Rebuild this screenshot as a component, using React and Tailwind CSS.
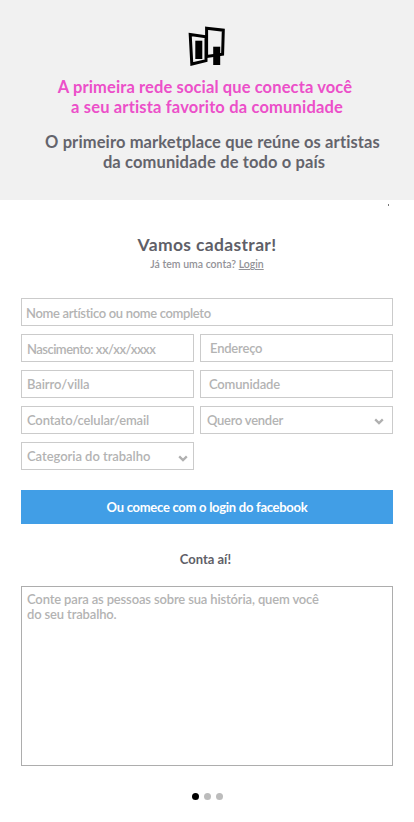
import React from "react";

function Logo() {
  return (
    <svg width="38" height="40" viewBox="0 0 38 40" fill="none" className="block">
      <path d="M2.2 8.6 L18 10.8 L18 34.6 L3.8 38 Z" stroke="#000" strokeWidth="3" />
      <path d="M7.3 14.7H14.3V33H7.3Z" fill="#000" />
      <path d="M18.6 2.2 L35.3 4.2 L34.6 28.2 L18.6 30.6 Z" fill="#f1f1f1" stroke="#000" strokeWidth="3" />
      <path d="M25.2 20.7H32.2V39H25.2Z" fill="#000" />
    </svg>
  );
}

function Chevron({ className }) {
  return (
    <svg width="10" height="7" viewBox="0 0 10 7" fill="none" className={"block shrink-0 " + className}>
      <path d="M1.2 1.4 L5 5.1 L8.8 1.4" stroke="#b0b0b0" strokeWidth="2.3" />
    </svg>
  );
}

function Field({ className = "", textClass, children, chevron }) {
  return (
    <div className={"flex h-7 justify-between border border-[#cbcbcb] text-[13px] leading-4 whitespace-nowrap text-[#b3b3b3] " + className}>
      <span className={textClass}>{children}</span>
      {chevron && <Chevron className={chevron} />}
    </div>
  );
}

export default function App() {
  return (
    <main className="h-[822px] w-[414px] overflow-hidden bg-white font-['Lato',sans-serif] font-semibold [font-variant-ligatures:none]">
      <header className="flex h-[200px] flex-col items-center bg-[#f1f1f1] pt-[26px] text-[16.5px] leading-5 font-bold whitespace-nowrap">
        <Logo />
        <h1 className="mt-[11px] flex flex-col items-center text-[#ec4fc9]">
          <span className="-ml-1 tracking-[0.12px]">A primeira rede social que conecta você</span>
          <span className="tracking-[0.17px]">a seu artista favorito da comunidade</span>
        </h1>
        <h2 className="mt-[15px] flex flex-col items-center text-[#64646c]">
          <span className="ml-[11px] tracking-[0.12px]">O primeiro marketplace que reúne os artistas</span>
          <span className="ml-[14px] tracking-[0.12px]">da comunidade de todo o país</span>
        </h2>
      </header>
      <div className="mt-1 mr-[25px] ml-auto h-0.5 w-px bg-[#777]" />

      <section className="mt-[29px] flex flex-col items-center whitespace-nowrap">
        <h3 className="text-[17.5px] leading-5 font-bold tracking-[0.35px] text-[#5f5f68]">Vamos cadastrar!</h3>
        <p className="mt-[3px] text-[10.5px] leading-3 text-[#929297]">
          Já tem uma conta? <a className="underline underline-offset-1">Login</a>
        </p>
      </section>

      <form className="mx-[21px] mt-7 grid grid-cols-[173px_193px] gap-x-1.5 gap-y-2">
        <Field className="col-span-2" textClass="pt-1.5 pl-1 tracking-[-0.34px]">Nome artístico ou nome completo</Field>
        <Field textClass="pt-1.5 pl-[5px] tracking-[-0.52px]">Nascimento: xx/xx/xxxx</Field>
        <Field textClass="pt-[5px] pl-[9px] tracking-[-0.2px]">Endereço</Field>
        <Field textClass="pt-[5px] pl-[5px] tracking-[-0.1px]">Bairro/villa</Field>
        <Field textClass="pt-[5px] pl-2 tracking-[-0.17px]">Comunidade</Field>
        <Field textClass="pt-[5px] pl-[5px] tracking-[-0.15px]">Contato/celular/email</Field>
        <Field textClass="pt-[5px] pl-1.5 tracking-[-0.27px]" chevron="mt-[11px] mr-2">Quero vender</Field>
        <Field textClass="pt-[5px] pl-[5px] tracking-[-0.05px]" chevron="mt-3 mr-[5px]">Categoria do trabalho</Field>
      </form>

      <button className="mx-[21px] mt-5 flex h-[34px] w-[372px] items-center justify-center bg-[#419ee6] pt-0.5 text-[13px] font-bold tracking-[-0.27px] text-white">
        Ou comece com o login do facebook
      </button>

      <h4 className="mt-[27px] pr-[3px] text-center text-[13px] leading-4 font-bold text-[#5f5f68]">Conta aí!</h4>
      <div className="mx-[21px] mt-[19px] h-[180px] border border-[#adadad] pt-[5px] pl-[5px] text-[13px] leading-[15px] whitespace-nowrap text-[#b3b3b3]">
        <p className="tracking-[-0.15px]">Conte para as pessoas sobre sua história, quem você</p>
        <p className="tracking-[-0.15px]">do seu trabalho.</p>
      </div>

      <nav className="mt-[27px] ml-48 flex gap-[5px]">
        <span className="size-[7px] rounded-full bg-black" />
        <span className="size-[7px] rounded-full bg-[#bcbcbc]" />
        <span className="size-[7px] rounded-full bg-[#bcbcbc]" />
      </nav>
    </main>
  );
}
